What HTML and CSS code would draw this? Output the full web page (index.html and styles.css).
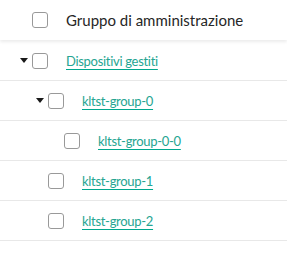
FILE: index.html
```html
<!DOCTYPE html>
<html lang="it">
<head>
  <meta charset="UTF-8" />
  <title>Gruppi di amministrazione</title>
  <link rel="stylesheet" href="styles.css">
</head>
<body>

<div class="tree">
  <div class="head">
    <span class="caret-slot"></span>
    <span class="check"></span>
    <span class="title">Gruppo di amministrazione</span>
  </div>

  <div class="row lvl-0">
    <span class="caret-slot"><span class="caret"></span></span>
    <span class="check"></span>
    <a href="#">Dispositivi gestiti</a>
  </div>
  <div class="row lvl-1">
    <span class="caret-slot"><span class="caret"></span></span>
    <span class="check"></span>
    <a href="#">kltst-group-0</a>
  </div>
  <div class="row lvl-2">
    <span class="caret-slot"></span>
    <span class="check"></span>
    <a href="#">kltst-group-0-0</a>
  </div>
  <div class="row lvl-1">
    <span class="caret-slot"></span>
    <span class="check"></span>
    <a href="#">kltst-group-1</a>
  </div>
  <div class="row lvl-1">
    <span class="caret-slot"></span>
    <span class="check"></span>
    <a href="#">kltst-group-2</a>
  </div>
</div>

</body>
</html>
```

FILE: styles.css
```css
body { margin: 0; background: #fff; font-family: Lato, "Noto Sans", sans-serif; color: #262626; }
.tree { width: 287px; }
.head { display: flex; align-items: center; height: 40px; padding-left: 16px; position: relative; box-shadow: 0 2px 3px rgba(0,0,0,0.08); margin-bottom: 1px; }
.title { font-size: 15px; margin-left: 18px; }
.row { display: flex; align-items: center; height: 39px; border-bottom: 1px solid #e8e8e8; padding-left: 16px; }
.lvl-1 { padding-left: 32px; }
.lvl-2 { padding-left: 48px; }
.caret-slot { width: 16px; display: flex; justify-content: center; align-items: center; }
.caret { width: 0; height: 0; border-left: 4px solid transparent; border-right: 4px solid transparent; border-top: 5px solid #1a1a1a; margin-left: -1px; }
.check { width: 14px; height: 14px; border: 1px solid #999; border-radius: 3px; background: #fff; }
.row a { font-size: 13px; letter-spacing: -0.3px; margin-left: 18px; color: #26a592; text-decoration: underline; text-decoration-color: #00a88e; text-underline-offset: 3px; }
```
